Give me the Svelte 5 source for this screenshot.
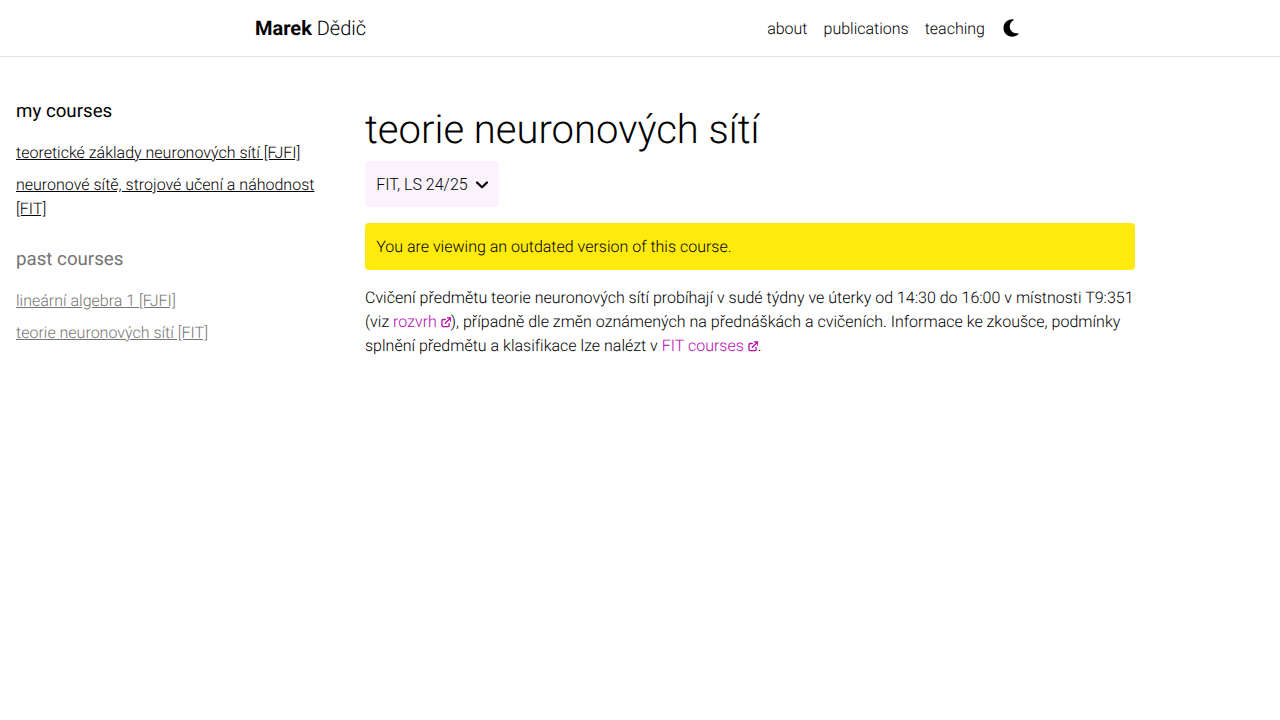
<script>
  const nav = ['about', 'publications', 'teaching'];
  const current = ['teoretické základy neuronových sítí [FJFI]', 'neuronové sítě, strojové učení a náhodnost [FIT]'];
  const past = ['lineární algebra 1 [FJFI]', 'teorie neuronových sítí [FIT]'];
</script>

{#snippet ext()}
  <svg class="ext" viewBox="0 0 11 11" aria-hidden="true"><path d="M4.500 2.600H2.300Q1 2.600 1 3.900V8.700Q1 10 2.300 10H7.200Q8.500 10 8.500 8.700V6.700M6.600 .9H10.200V4.500M10 1.100L4.500 6.600" /></svg>
{/snippet}

<header>
  <div class="bar">
    <a class="brand" href="#top"><b>Marek</b> Dědič</a>
    <nav>
      {#each nav as item}<a href="#{item}">{item}</a>{/each}
      <button class="theme" aria-label="theme">
        <svg viewBox="0 0 384 512"><path d="M223.500 32C100 32 0 132.300 0 256S100 480 223.500 480c60.600 0 115.500-24.200 155.800-63.400c5-4.900 6.300-12.500 3.100-18.700s-10.100-9.700-17-8.500c-9.800 1.700-19.800 2.600-30.100 2.600c-96.900 0-175.500-78.800-175.500-176c0-65.800 36-123.100 89.300-153.300c6.100-3.500 9.200-10.500 7.700-17.300s-7.300-11.900-14.300-12.500c-6.300-.5-12.600-.8-19-.8z" /></svg>
      </button>
    </nav>
  </div>
</header>

<div class="page">
  <aside>
    <section>
      <h2>my courses</h2>
      <ul>{#each current as c}<li><a href="#course">{c}</a></li>{/each}</ul>
    </section>
    <section class="past">
      <h2>past courses</h2>
      <ul>{#each past as c}<li><a href="#course">{c}</a></li>{/each}</ul>
    </section>
  </aside>
  <main>
    <h1>teorie neuronových sítí</h1>
    <button class="select">FIT, LS 24/25
      <svg viewBox="0 0 14 10"><path d="M2 2.500L7 7.300L12 2.500" /></svg>
    </button>
    <div class="notice">You are viewing an outdated version of this course.</div>
    <p>Cvičení předmětu teorie neuronových sítí probíhají v sudé týdny ve úterky od 14:30 do 16:00 v místnosti T9:351 (viz <a href="#rozvrh">rozvrh {@render ext()}</a>), případně dle změn oznámených na přednáškách a cvičeních. Informace ke zkoušce, podmínky splnění předmětu a klasifikace lze nalézt v <a href="#fit">FIT courses {@render ext()}</a>.</p>
  </main>
</div>

<style>
  :global(body) { margin: 0; background: #fff; color: #000; font: 300 16px/24px Roboto, sans-serif; text-rendering: geometricPrecision; -webkit-font-smoothing: antialiased; }
  header { border-bottom: 1px solid #e0e0e0; }
  .bar { box-sizing: border-box; width: 770px; height: 56px; margin: 0 auto; display: flex; align-items: center; justify-content: space-between; }
  a { color: inherit; text-decoration: none; }
  .brand { font-size: 20px; line-height: 30px; }
  b { font-weight: 700; }
  nav { display: flex; align-items: center; gap: 16px; }
  nav > a { padding-top: 1px; }
  button { border: 0; margin: 0; color: inherit; font: inherit; background: none; padding: 0; }
  .theme { width: 19.500px; height: 24px; margin-right: 4.500px; display: flex; align-items: center; justify-content: center; }
  .theme svg { width: 16px; height: 20px; }
  .page { display: grid; grid-template-columns: 365px 770px; }
  aside { box-sizing: border-box; width: 333px; padding: 40px 16px 0; }
  h2 { margin: 0 0 16px; font-size: 18.72px; font-weight: 400; line-height: 28px; }
  ul { margin: 0; padding: 0; list-style: none; display: grid; gap: 8px; }
  aside a { text-decoration: underline; }
  .past { margin-top: 24px; color: #757575; }
  main { padding-top: 49px; }
  h1 { font-size: 40px; line-height: 48px; font-weight: 300; margin: 0 0 7px; }
  .select { height: 46px; width: 134px; padding: 1px 10px 0 11.200px; display: flex; align-items: center; justify-content: space-between; background: #faf3fc; border-radius: 4px; }
  .select svg { width: 14px; height: 10px; }
  .select path { fill: none; stroke: currentColor; stroke-width: 2.200; stroke-linecap: round; stroke-linejoin: round; }
  .notice { margin: 16px 0; padding: 11.500px 11.200px; background: #ffea0d; border-radius: 4px; }
  p { margin: 0; letter-spacing: 0.004px; }
  p a { color: #b509ac; }
  .ext { width: 10.500px; height: 10.500px; margin-right: -0.500px; vertical-align: -0.500px; }
  .ext path { fill: none; stroke: currentColor; stroke-width: 1.350; stroke-linecap: round; stroke-linejoin: round; }
</style>
